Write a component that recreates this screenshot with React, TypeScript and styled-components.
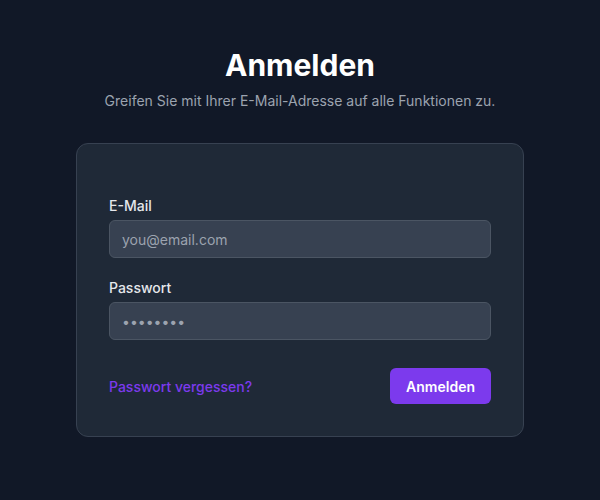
import React from "react";
import styled, { createGlobalStyle } from "styled-components";

const GlobalStyle = createGlobalStyle`
  html, body {
    margin: 0;
    padding: 0;
    background: #111827;
    font-family: Inter, "Noto Sans", sans-serif;
  }
`;

const Page = styled.div`
  min-height: 500px;
  box-sizing: border-box;
  padding-top: 47px;
  display: flex;
  flex-direction: column;
  align-items: center;
`;

const Title = styled.h1`
  margin: 0;
  font-size: 30px;
  line-height: 36px;
  font-weight: 700;
  color: #ffffff;
`;

const Subtitle = styled.p`
  margin: 8px 0 0;
  font-size: 14px;
  line-height: 20px;
  color: #9ca3af;
`;

const Card = styled.form`
  margin-top: 32px;
  width: 448px;
  box-sizing: border-box;
  padding: 52px 32px 32px;
  background: #1f2937;
  border: 1px solid #374151;
  border-radius: 12px;
  display: flex;
  flex-direction: column;
`;

const Field = styled.div`
  display: flex;
  flex-direction: column;
  gap: 4px;
  margin-bottom: 20px;
`;

const Label = styled.label`
  font-size: 14px;
  line-height: 20px;
  font-weight: 500;
  color: #e5e7eb;
`;

const Input = styled.input`
  height: 38px;
  box-sizing: border-box;
  padding: 0 12px;
  background: #374151;
  border: 1px solid #4b5563;
  border-radius: 6px;
  font-family: inherit;
  font-size: 14px;
  color: #f3f4f6;
  outline: none;

  &::placeholder {
    color: #9ca3af;
  }
`;

const Actions = styled.div`
  margin-top: 8px;
  display: flex;
  align-items: center;
  justify-content: space-between;
`;

const Link = styled.a`
  font-size: 14px;
  font-weight: 500;
  color: #7c3aed;
  text-decoration: none;
`;

const Button = styled.button`
  height: 36px;
  padding: 0 16px;
  border: none;
  border-radius: 6px;
  background: #7c3aed;
  color: #ffffff;
  font-family: inherit;
  font-size: 14px;
  font-weight: 600;
`;

const App = () => {
  return (
    <>
      <GlobalStyle />
      <Page>
        <Title>Anmelden</Title>
        <Subtitle>Greifen Sie mit Ihrer E-Mail-Adresse auf alle Funktionen zu.</Subtitle>
        <Card onSubmit={(e) => e.preventDefault()}>
          <Field>
            <Label>E-Mail</Label>
            <Input type="email" placeholder="you@email.com" />
          </Field>
          <Field>
            <Label>Passwort</Label>
            <Input type="password" placeholder="••••••••" />
          </Field>
          <Actions>
            <Link href="#">Passwort vergessen?</Link>
            <Button type="submit">Anmelden</Button>
          </Actions>
        </Card>
      </Page>
    </>
  );
};

export default App;
